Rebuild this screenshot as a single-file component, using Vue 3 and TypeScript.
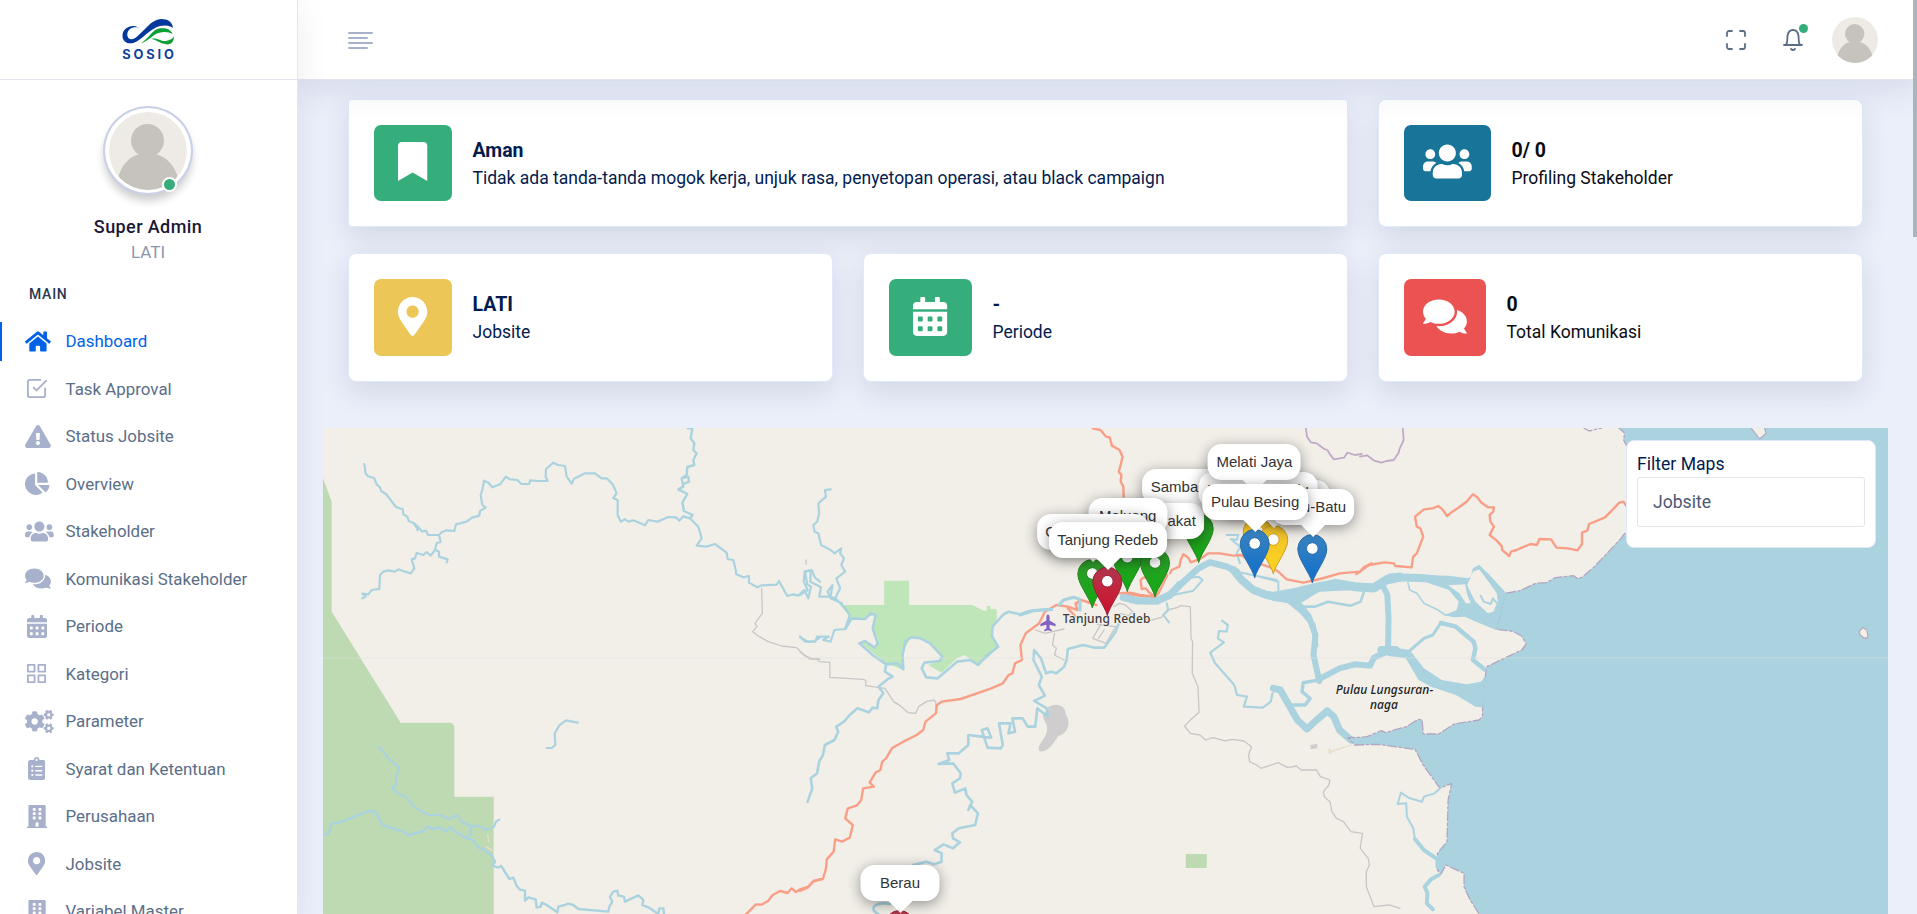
<script setup lang="ts">
interface Glyph { w: number; d: string; extra?: string; line?: boolean }

const sq = (x: number, y: number, s = 64): string =>
  `M${x + 12} ${y}h${s - 24}q12 0 12 12v${s - 24}q0 12-12 12h-${s - 24}q-12 0-12-12v-${s - 24}q0-12 12-12z`

const smallGear =
  'M512.1 191l-8.2 14.3c-3 5.3-9.4 7.5-15.1 5.4-11.8-4.4-22.6-10.7-32.1-18.6-4.6-3.8-5.8-10.5-2.8-15.7l8.2-14.3c-6.9-8-12.3-17.3-15.9-27.4h-16.5c-6 0-11.2-4.3-12.2-10.3-2-12-2.1-24.6 0-37.1 1-6 6.2-10.4 12.2-10.4h16.5c3.6-10.1 9-19.4 15.9-27.4l-8.2-14.3c-3-5.2-1.9-11.9 2.8-15.7 9.5-7.9 20.4-14.2 32.1-18.6 5.7-2.1 12.1.1 15.1 5.4l8.2 14.3c10.5-1.9 21.2-1.9 31.7 0L552 6.3c3-5.3 9.4-7.5 15.1-5.4 11.8 4.4 22.6 10.7 32.1 18.6 4.6 3.8 5.8 10.5 2.8 15.7l-8.2 14.3c6.9 8 12.3 17.3 15.9 27.4h16.5c6 0 11.2 4.3 12.2 10.3 2 12 2.1 24.6 0 37.1-1 6-6.2 10.4-12.2 10.4h-16.5c-3.6 10.1-9 19.4-15.9 27.4l8.2 14.3c3 5.2 1.9 11.9-2.8 15.7-9.5 7.9-20.4 14.2-32.1 18.6-5.7 2.1-12.1-.1-15.1-5.4l-8.2-14.3c-10.4 1.9-21.2 1.9-31.7 0zm-10.5-58.8c38.5 29.6 82.4-14.3 52.8-52.8-38.5-29.7-82.4 14.3-52.8 52.8z'
const bigGear =
  'M386.3 286.1l33.7 16.8c10.1 5.8 14.5 18.1 10.5 29.1-8.9 24.2-26.4 46.4-42.6 65.8-7.4 8.9-20.2 11.1-30.3 5.3l-29.1-16.8c-16 13.7-34.6 24.6-54.9 31.7v33.6c0 11.6-8.3 21.6-19.7 23.6-24.6 4.2-50.4 4.4-75.9 0-11.5-2-20-11.9-20-23.6V418c-20.3-7.2-38.9-18-54.9-31.7L74 403c-10 5.8-22.9 3.6-30.3-5.3-16.2-19.4-33.3-41.6-42.2-65.7-4-10.9.4-23.2 10.5-29.1l33.3-16.8c-3.9-20.9-3.9-42.4 0-63.4L12 205.8c-10.1-5.8-14.6-18.1-10.5-29 8.9-24.2 26-46.4 42.2-65.8 7.4-8.9 20.2-11.1 30.3-5.3l29.1 16.8c16-13.7 34.6-24.6 54.9-31.7V57.1c0-11.5 8.2-21.5 19.6-23.5 24.6-4.2 50.5-4.4 76-.1 11.5 2 20 11.9 20 23.6v33.6c20.3 7.2 38.9 18 54.9 31.7l29.1-16.8c10-5.8 22.9-3.6 30.3 5.3 16.2 19.4 33.2 41.6 42.1 65.8 4 10.9.1 23.2-10 29.1l-33.7 16.8c3.9 21 3.9 42.5 0 63.5zm-117.6 21.1c59.2-77-28.7-164.9-105.7-105.7-59.2 77 28.7 164.9 105.7 105.7z'

const glyphs: Record<string, Glyph> = {
  home: { w: 576, d: 'M280.37 148.26L96 300.11V464a16 16 0 0 0 16 16l112.06-.29a16 16 0 0 0 15.92-16V368a16 16 0 0 1 16-16h64a16 16 0 0 1 16 16v95.64a16 16 0 0 0 16 16.05L464 480a16 16 0 0 0 16-16V300L295.67 148.26a12.19 12.19 0 0 0-15.3 0zM571.6 251.47L488 182.56V44.05a12 12 0 0 0-12-12h-56a12 12 0 0 0-12 12v72.61L318.47 43a48 48 0 0 0-61 0L4.34 251.47a12 12 0 0 0-1.6 16.9l25.5 31A12 12 0 0 0 45.15 301l235.22-193.74a12.19 12.19 0 0 1 15.3 0L530.9 301a12 12 0 0 0 16.9-1.6l25.5-31a12 12 0 0 0-1.7-16.93z' },
  check: { w: 24, line: true, d: 'M9 11l3 3L22 4M21 12v7a2 2 0 0 1-2 2H5a2 2 0 0 1-2-2V5a2 2 0 0 1 2-2h11' },
  grid: { w: 24, line: true, d: 'M3 3h7v7H3zM14 3h7v7h-7zM14 14h7v7h-7zM3 14h7v7H3z' },
  warning: { w: 576, d: 'M569.517 440.013C587.975 472.007 564.806 512 527.94 512H48.054c-36.937 0-59.999-40.055-41.577-71.987L246.423 23.985c18.467-32.009 64.72-31.951 83.154 0l239.94 416.028zM288 354c-25.405 0-46 20.595-46 46s20.595 46 46 46 46-20.595 46-46-20.595-46-46-46zm-43.673-165.346l7.418 136c.347 6.364 5.609 11.346 11.982 11.346h48.546c6.373 0 11.635-4.982 11.982-11.346l7.418-136c.375-6.874-5.098-12.654-11.982-12.654h-63.383c-6.884 0-12.356 5.78-11.981 12.654z' },
  pie: { w: 544, d: 'M527.79 288H290.5l158.03 158.03c6.04 6.04 15.98 6.53 22.19.68 38.7-36.46 65.32-85.61 73.13-140.86 1.34-9.46-6.51-17.85-16.06-17.85zm-15.83-64.8C503.72 103.74 408.26 8.28 288.8.04 279.68-.59 272 7.1 272 16.24V240h223.77c9.14 0 16.82-7.68 16.19-16.8zM224 288V50.71c0-9.55-8.39-17.4-17.84-16.06C86.99 51.49-4.1 155.6.14 280.37 4.5 408.51 114.83 513.59 243.03 511.98c50.4-.63 96.97-16.87 135.26-44.03 7.9-5.6 8.42-17.23 1.57-24.08L224 288z' },
  users: { w: 640, d: 'M96 224c35.3 0 64-28.7 64-64s-28.7-64-64-64-64 28.7-64 64 28.7 64 64 64zm448 0c35.3 0 64-28.7 64-64s-28.7-64-64-64-64 28.7-64 64 28.7 64 64 64zm32 32h-64c-17.6 0-33.5 7.1-45.1 18.6 40.3 22.1 68.9 62 75.1 109.4h66c17.7 0 32-14.3 32-32v-32c0-35.3-28.7-64-64-64zm-256 0c61.9 0 112-50.1 112-112S381.9 32 320 32 208 82.1 208 144s50.1 112 112 112zm76.8 32h-8.3c-20.8 10-43.9 16-68.5 16s-47.6-6-68.5-16h-8.3C179.6 288 128 339.6 128 403.2V432c0 26.5 21.5 48 48 48h288c26.5 0 48-21.5 48-48v-28.8c0-63.6-51.6-115.2-115.2-115.2zm-223.7-13.4C161.5 263.1 145.6 256 128 256H64c-35.3 0-64 28.7-64 64v32c0 17.7 14.3 32 32 32h65.9c6.3-47.4 34.9-87.3 75.2-109.4z' },
  comments: { w: 576, d: 'M416 192c0-88.4-93.1-160-208-160S0 103.6 0 192c0 34.3 14.1 65.9 38 92-13.4 30.2-35.5 54.2-35.8 54.5-2.2 2.3-2.8 5.7-1.5 8.7S4.8 352 8 352c36.6 0 66.9-12.3 88.7-25 32.2 15.7 70.3 25 111.3 25 114.9 0 208-71.6 208-160zm122 220c23.9-26 38-57.7 38-92 0-66.9-53.5-124.2-129.3-148.1.9 6.6 1.3 13.3 1.3 20.1 0 105.9-107.7 192-240 192-10.8 0-21.3-.8-31.7-1.9C207.8 439.6 281.8 480 368 480c41 0 79.1-9.2 111.3-25 21.8 12.7 52.1 25 88.7 25 3.2 0 6.1-1.9 7.3-4.8 1.3-2.9.7-6.3-1.5-8.7-.3-.3-22.4-24.2-35.8-54.5z' },
  calendar: { w: 448, d: 'M0 464c0 26.5 21.5 48 48 48h352c26.5 0 48-21.5 48-48V192H0v272zM400 64h-48V16c0-8.8-7.2-16-16-16h-32c-8.8 0-16 7.2-16 16v48H160V16c0-8.8-7.2-16-16-16h-32c-8.8 0-16 7.2-16 16v48H48C21.5 64 0 85.5 0 112v48h448v-48c0-26.5-21.5-48-48-48z' + [64, 192, 320].map((x) => sq(x, 256) + sq(x, 384)).join('') },
  cogs: { w: 640, d: bigGear + smallGear, extra: smallGear },
  clipboard: { w: 384, d: 'M336 64h-80c0-35.3-28.7-64-64-64s-64 28.7-64 64H48C21.5 64 0 85.5 0 112v352c0 26.5 21.5 48 48 48h288c26.5 0 48-21.5 48-48V112c0-26.5-21.5-48-48-48zM96 424c-13.3 0-24-10.7-24-24s10.7-24 24-24 24 10.7 24 24-10.7 24-24 24zm0-96c-13.3 0-24-10.7-24-24s10.7-24 24-24 24 10.7 24 24-10.7 24-24 24zm0-96c-13.3 0-24-10.7-24-24s10.7-24 24-24 24 10.7 24 24-10.7 24-24 24zm96-192c13.3 0 24 10.7 24 24s-10.7 24-24 24-24-10.7-24-24 10.7-24 24-24zM168 192h144q8 0 8 8v16q0 8-8 8H168q-8 0-8-8v-16q0-8 8-8zM168 288h144q8 0 8 8v16q0 8-8 8H168q-8 0-8-8v-16q0-8 8-8zM168 384h144q8 0 8 8v16q0 8-8 8H168q-8 0-8-8v-16q0-8 8-8z' },
  building: { w: 448, d: 'M436 480h-20V24c0-13.255-10.745-24-24-24H56C42.745 0 32 10.745 32 24v456H12c-6.627 0-12 5.373-12 12v20h448v-20c0-6.627-5.373-12-12-12zM192 480v-84q0-12 12-12h40q12 0 12 12v84z' + [64, 160, 256].map((y) => sq(128, y) + sq(256, y)).join('') },
  marker: { w: 384, d: 'M172.268 501.67C26.97 291.031 0 269.413 0 192 0 85.961 85.961 0 192 0s192 85.961 192 192c0 77.413-26.97 99.031-172.268 309.67-9.535 13.774-29.93 13.773-39.464 0zM192 272c44.183 0 80-35.817 80-80s-35.817-80-80-80-80 35.817-80 80 35.817 80 80 80z' },
  bookmark: { w: 384, d: 'M0 512V48C0 21.49 21.49 0 48 0h288c26.51 0 48 21.49 48 48v464L192 400 0 512z' },
}

const glyphWidth = (name: string, size: number): number => {
  const g = glyphs[name]
  return g.line ? size : (g.w / 512) * size
}

const menu = [
  { label: 'Dashboard', icon: 'home', active: true },
  { label: 'Task Approval', icon: 'check' },
  { label: 'Status Jobsite', icon: 'warning' },
  { label: 'Overview', icon: 'pie' },
  { label: 'Stakeholder', icon: 'users' },
  { label: 'Komunikasi Stakeholder', icon: 'comments' },
  { label: 'Periode', icon: 'calendar' },
  { label: 'Kategori', icon: 'grid' },
  { label: 'Parameter', icon: 'cogs' },
  { label: 'Syarat dan Ketentuan', icon: 'clipboard' },
  { label: 'Perusahaan', icon: 'building' },
  { label: 'Jobsite', icon: 'marker' },
  { label: 'Variabel Master', icon: 'building' },
]

const cards = [
  { title: 'Aman', text: 'Tidak ada tanda-tanda mogok kerja, unjuk rasa, penyetopan operasi, atau black campaign', icon: 'bookmark', tone: 'green', cls: 'wide navy' },
  { title: '0/ 0', text: 'Profiling Stakeholder', icon: 'users', tone: 'teal', cls: 'dark' },
  { title: 'LATI', text: 'Jobsite', icon: 'marker', tone: 'yellow', cls: 'navy' },
  { title: '-', text: 'Periode', icon: 'calendar', tone: 'green cal', cls: 'navy' },
  { title: '0', text: 'Total Komunikasi', icon: 'comments', tone: 'red', cls: 'dark' },
]

/* Map layers, grouped by survey sheet; each sheet has its own origin and scale. */
interface Shape { k: string; d: string; w?: number }
const sheets: { t: string; shapes: Shape[] }[] = [
  {
    t: 'translate(320 425) scale(.33333)',
    shapes: [
      { k: 'park', d: 'M0 135L9 160 35 230V560L242 893H395L403 903V1115H521V1470H0Z' },
      { k: 'river', d: 'M133 117L137 145 143 153 163 160 170 178 180 187 183 198 198 207 228 246 248 253 250 268 262 275 266 288 282 295 290 308 300 312 306 320 318 317 324 330 357 330 365 322 380 316 403 318 408 298 440 290 456 278 478 272 480 258 497 248 487 240 482 210 487 195 492 167 505 173 517 187 540 178 558 155 570 163 592 165 604 177 628 177 630 166 655 168 683 168 677 155 678 132 700 113 714 120 735 123 740 155 755 176 762 161 795 145 825 145 845 160 860 160 878 178 890 205 880 219 893 226 893 270 902 290 915 283 925 290 940 286 975 301 985 285 1012 290 1045 276 1068 277 1078 287 1090 274 1110 280 1135 305 1145 340 1130 362 1160 365 1185 357 1220 383 1223 402 1240 405 1248 438 1248 447 1270 457 1287 453 1287 473 1312 487 1325 481 1370 479 1377 468 1402 513 1420 508 1435 512 1453 495 1465 520 1473 485 1462 478 1455 440 1475 435 1485 458 1500 470' },
      { k: 'river', d: 'M285 298L296 308 292 316M357 330L362 350 350 355 345 375 332 392 320 381 310 390 290 384 285 400 275 403 283 430 272 445 255 440 235 433 225 440 205 436 190 440 180 450 178 492 155 495 145 508 127 506 137 514 127 520M347 375L357 380 357 395 383 403 380 412' },
      { k: 'river', w: 2.4, d: 'M1103 10H1117L1112 40 1123 55 1120 75 1130 85 1120 105 1123 120 1102 126 1100 150 1085 160 1090 185 1075 193 1102 207 1087 232 1092 258 1118 270 1110 280M1085 160L1105 155 1107 170 1088 178' },
      { k: 'river', d: 'M773 893L738 886 718 901 704 925 706 960 695 969H680' },
      { k: 'river', d: 'M177 966L207 1001 237 1028 229 1053 229 1077 217 1090 240 1108 260 1118 282 1146 325 1170 360 1170 385 1182 412 1170 425 1190 455 1205 475 1202 495 1215 522 1205 528 1190 538 1184M455 1205L452 1228 437 1240' },
      { k: 'river', w: 2.4, d: 'M9 1230L26 1226 34 1197 60 1192 110 1172 147 1158 167 1161 187 1200 225 1213 245 1218 265 1230 312 1218 322 1203 335 1212 358 1207 378 1220 393 1207 405 1220 440 1240 460 1245 473 1267 490 1273 515 1292 525 1310 517 1322 535 1328 543 1322 568 1362 580 1358 590 1383 600 1394 615 1397 615 1427 625 1417 647 1423 650 1448 662 1445 665 1433 680 1440 712 1462 715 1445 735 1440 745 1436 760 1440 775 1452 865 1460 868 1445 877 1430 870 1415 880 1400 892 1397 895 1412 912 1415 915 1430 955 1411 970 1425 967 1440 985 1447 1015 1467 1018 1450 1030 1450 1032 1465' },
      { k: 'river', d: 'M1440 634L1455 650 1480 650 1500 638' },
      { k: 'lane', d: 'M1325 490L1327 565 1305 595 1311 604 1298 620 1318 635 1345 650 1385 663 1430 668 1455 692 1480 703 1500 702M1458 405V418' },
      { k: 'road', d: 'M1500 1362L1480 1370 1465 1385 1440 1393 1428 1401 1415 1390 1403 1404 1380 1398 1358 1410 1345 1427 1325 1439 1308 1438 1277 1469' },
      { k: 'pale', d: 'M503 1230L506 1250M498 1265L520 1278' },
    ],
  },
  {
    t: 'translate(800 425) scale(.38265 .33333)',
    shapes: [
      { k: 'forest', d: 'M105 540H220V467H285V540H450L480 557H488V543H498V553H514V583L500 610 505 640 518 665 490 700 465 718 430 690 410 700 370 743 335 720 372 703 355 670 320 645 290 638 268 680 270 735 225 715 160 655 175 648 200 668 203 640 190 610 197 570 135 585 118 612 130 575Z' },
      { k: 'park', d: 'M1008 1287H1063V1329H1008Z' },
      { k: 'quarry', d: 'M650 845C670 832 695 840 695 870 707 885 705 925 675 933 660 960 645 985 625 978 618 960 640 945 645 920 650 895 635 890 635 870Z' },
      { k: 'quarry', d: 'M1333 960L1352 956V970L1335 973Z' },
      { k: 'sand', d: 'M1383 985V972L1388 980 1440 960M1383 985L1395 978' },
      { k: 'road', d: 'M765 10L785 15 800 35 810 38 815 62 835 75 843 95 838 120 833 140 840 150 838 170 845 185 846 215' },
      { k: 'lane', d: 'M0 680L25 702 45 700 50 710 78 712V757L165 763 172 766V782L222 790 245 830 265 845 283 863 302 865 310 845 330 830 350 825 355 832V850' },
      { k: 'lane', d: 'M885 580L920 585 945 577 960 555 985 548 995 542 1020 545 1022 640 1026 650 1025 745 1040 785 1043 862 1025 880 1005 903 1020 925 1045 930 1060 945 1080 938 1110 948 1130 943 1160 948 1180 965 1172 990 1175 1010 1190 1018 1205 1030 1250 1013 1275 1028 1297 1023 1310 1035 1350 1035 1360 1055 1385 1065 1382 1080 1368 1100 1370 1115 1385 1130 1390 1160 1402 1180 1420 1190 1440 1220 1470 1225 1464 1270 1485 1300 1488 1320 1480 1340V1385L1500 1445 1540 1440 1568 1450' },
      { k: 'lane', d: 'M615 615L640 625 690 612M665 625L660 660 670 670 665 690 690 705M765 640L785 600 825 605 800 655ZM780 640L795 615M820 545L835 535 850 540 870 560 858 572 835 565M750 590L790 600' },
      { k: 'river', d: 'M80 193L65 195 68 215 48 235 50 265 45 290 35 300 38 320 48 325 55 360 80 375 90 385 108 370 105 385 115 400 108 420 118 440 95 460 105 490 92 520 80 515 85 480 72 500 80 520 110 535M92 520L115 545 130 570 118 612 90 615 80 650 60 645 75 635 45 635 40 650 20 650 0 637' },
      { k: 'river', d: 'M0 510L20 495 10 470 12 440 28 436 27 470 55 487 50 515 78 515' },
      { k: 'river', w: 2.6, d: 'M645 553L600 558 575 568 545 560 530 570 503 605 502 635 518 665 490 690 465 720 445 705 410 710 360 760 330 757 318 730 325 713 365 708 372 695 340 655 315 640 290 637 275 650 268 690 270 733 255 715 225 718 190 690 155 655 170 648 195 668 203 655 190 610 198 570 185 565 170 582 135 580 118 612' },
      { k: 'river', w: 2.6, d: 'M225 718L222 740 242 755 230 762 205 785 218 805 205 825 202 850 190 848 180 862 150 850 130 870 115 890 95 905 100 920 90 945 65 960 60 990 50 1010 45 1045 28 1060 32 1090 20 1130' },
      { k: 'river', w: 2.6, d: 'M833 595L825 620 795 668 770 668 740 660 700 672 697 705 690 725 670 745 655 740 643 745 630 700 612 675 610 705 632 755 624 780 640 812 612 828 645 850 648 875 620 850 615 905 595 905 582 880 555 880 562 920 545 925 550 895 520 895 530 960 525 970 490 968 475 915 490 910 500 938 475 935 440 930 440 960 415 985 385 985 390 1005 362 1017 400 1015 420 1045 418 1060 398 1075 405 1103 432 1090 435 1110 450 1130 440 1155 445 1140 465 1165 458 1200 415 1210 398 1225 400 1240 418 1252 400 1270 375 1258 352 1275 370 1285 370 1310 350 1318 330 1310 295 1320M235 1437C200 1430 185 1445 195 1460L205 1467' },
      { k: 'road', d: 'M845 505L900 515 925 515 937 505 960 450M735 525L720 535 725 555 700 545 670 540 640 560 625 595 590 625 576 660 580 705 562 715 555 745 545 750 530 775 500 790 420 822 370 830 358 840 355 865 328 890 322 915 305 930 270 950 240 970 225 1000 215 1010 210 1035 198 1042 182 1072 193 1085 165 1090 160 1125 148 1142 125 1150 118 1180 138 1200 130 1238 110 1250 92 1243 88 1280 70 1303 68 1330 60 1362 35 1368 20 1388 0 1398M700 550L725 580M725 535L735 525 775 540' },
      { k: 'admin', w: 1.8, d: 'M1322 10L1325 35 1335 52 1350 55 1370 72 1378 75 1385 88 1395 103 1422 98 1430 83 1450 90 1468 87' },
      { k: 'river', d: 'M1103 587L1118 600 1115 620 1095 618 1092 640 1108 652 1072 683 1085 715 1135 780 1142 810 1168 815 1160 845 1210 848 1230 830 1235 805' },
      { k: 'river', w: 7, d: 'M1237 790L1255 795 1275 835 1300 885 1325 912 1350 885 1378 858 1395 875 1410 915 1440 945' },
      { k: 'river', w: 3.5, d: 'M1285 840H1320L1333 820 1312 800 1315 773 1355 765' },
      { k: 'river', w: 6, d: 'M1295 525L1330 575 1347 630 1342 690 1357 768' },
      { k: 'river', w: 6, d: 'M1355 763L1410 730 1450 718 1490 722 1500 698 1530 682 1568 684' },
      { k: 'river', w: 6, d: 'M1522 480L1535 510 1538 580 1537 670' },
      { k: 'river', w: 2.6, d: 'M1310 545L1345 545 1380 530 1440 542 1465 530 1475 497' },
      { k: 'river', w: 9, d: 'M1240 515L1310 518 1350 488 1400 475 1450 485 1500 489 1532 465 1568 456' },
    ],
  },
  {
    t: 'translate(1360 420) scale(.35523 .33333)',
    shapes: [
      { k: 'sea', d: 'M725 20L745 40 742 60 755 85V330L735 355 700 395 660 440 625 472 612 475 600 467 550 473 525 488 495 490 450 512 410 520 383 628 430 634 455 648 468 672 455 690 400 718 357 740 352 775 345 830V890L335 900 265 912 222 942H178L175 900 165 898 130 920 72 938 60 932 20 950 0 952 -34 953 -15 975 50 973 155 988 178 1035 225 1105 258 1090 248 1140 245 1265 218 1300V1350L228 1362 242 1335 293 1360V1400L310 1440 338 1486H1490V20Z' },
      { k: 'coast', d: 'M725 20L745 40 742 60 755 85M745 340L735 355 700 395 660 440 625 472 612 475 600 467 550 473 525 488 495 490 450 512 410 520 383 628 430 634 455 648 468 672 455 690 400 718 357 740 352 775 345 830V890L335 900 265 912 222 942H178L175 900 165 898 130 920 72 938 60 932 20 950 0 952 -34 953 -15 975 50 973 155 988 178 1035 225 1105 258 1090 248 1140 245 1265 218 1300V1350L228 1362 242 1335 293 1360V1400L310 1440 338 1486M630 24L645 33 680 24' },
      { k: 'isle', d: 'M1098 20L1125 57 1143 40 1138 20ZM1405 635L1415 623 1427 630 1430 652 1420 655 1408 645Z' },
      { k: 'water', d: 'M190 466L250 467 305 475 312 470 318 445 335 434 365 465 412 520 383 630 320 602 295 590 262 592 240 586 272 570 278 545 250 510 190 488Z' },
      { k: 'land', d: 'M302 495L318 455 335 448 360 482 385 520 388 545 375 575 360 580 325 545 308 510Z' },
      { k: 'land', d: 'M248 496L296 493 302 525 312 550 298 550 280 520Z' },
      { k: 'river', w: 2, d: 'M340 528L348 545 368 552 374 535 386 550' },
      { k: 'water', d: 'M80 680L140 690 180 745 230 780 300 793 340 785 354 768 345 862 325 860 270 825 200 800 165 780 140 735 128 714 80 708Z' },
      { k: 'river', w: 8, d: 'M0 502H40L85 472 170 474 210 478M60 690H100' },
      { k: 'river', w: 3, d: 'M140 692L180 655 205 645 228 608' },
      { k: 'river', w: 4.5, d: 'M228 609L270 620 320 665 325 685 318 720 350 748' },
      { k: 'river', w: 1.6, d: 'M135 488L140 510 160 520 180 550 220 570 240 585 275 577M240 585H290' },
      { k: 'river', w: 2, d: 'M226 1105L210 1120 180 1130 175 1145 140 1135 115 1118 106 1152 130 1150 132 1190 150 1225 155 1260' },
      { k: 'river', w: 4, d: 'M155 1258L180 1290 218 1318V1340M205 1468L188 1450 190 1420 182 1400 200 1378 222 1365' },
      { k: 'road', d: 'M-10 462L0 455 25 435 70 427 95 430 100 438 145 442 150 410 160 400 178 350 170 325 160 320 155 290 180 268 205 265 220 258 232 268 245 288 260 275 275 265 300 245 318 223 330 232 342 248 360 262 377 262 375 275 365 285 367 305 377 320 365 345 385 362 400 380 400 390 420 408 425 395 440 390 480 372 498 375 505 357 538 358 553 383 585 385 612 391 625 372 625 338 640 332 645 312 690 292 730 248 742 245 750 258' },
      { k: 'admin', w: 1.8, d: 'M120 20L123 60 112 85 108 100 95 120 75 123 60 128 40 122 20 106 0 110' },
    ],
  },
  {
    t: 'translate(1020 425) scale(.33333)',
    shapes: [
      { k: 'river', w: 3.2, d: 'M0 570L40 557 95 553M118 540L130 525 160 517 178 522M180 530V555' },
      { k: 'river', w: 7.5, d: 'M310 517L350 527 410 528 450 510 478 480' },
      { k: 'river', w: 6.5, d: 'M470 490L500 462 535 430 570 412 620 425 650 440' },
      { k: 'river', w: 8, d: 'M640 435L665 465 700 495 740 510 800 522' },
      { k: 'water', d: 'M760 500L820 490 900 470 960 472 1053 478V494L960 497 900 500 830 530 780 530 740 515Z' },
      { k: 'river', w: 5, d: 'M800 522L845 560 880 600 888 660' },
      { k: 'river', w: 2, d: 'M460 510L520 497 548 465 535 455 500 460M440 535L445 555 430 570 447 592M620 330L655 330 650 345 632 342 660 365 650 385 660 415M700 450L775 470V505L730 500M650 440L770 465' },
      { k: 'road', d: 'M290 505L330 503 360 510 405 515 415 505M405 515L385 500 378 490 365 492 362 465 370 458 385 458M450 445L455 435 478 425 482 405 490 388 505 398 512 412 540 402 565 385 600 385 640 392 665 390 690 410 715 415 760 430 775 440 800 463 850 473 900 462 960 445 1020 440 1030 428 1055 415' },
    ],
  },
]

interface Site { name: string; x: number; y: number; tone: string; w?: number }
const sites: Site[] = [
  { name: 'Sambakungan', x: 1198.7, y: 562.7, tone: 'green' },
  { name: 'Samburakat', x: 1155, y: 597, tone: 'green' },
  { name: 'Maluang', x: 1127.3, y: 591.7, tone: 'green', w: 79 },
  { name: 'Merancang Ilir', x: 1273.3, y: 574, tone: 'yellow' },
  { name: 'Merancang Ulu', x: 1257.7, y: 566, tone: 'yellow' },
  { name: 'Batu-Batu', x: 1312.3, y: 583, tone: 'blue' },
  { name: 'Melati Jaya', x: 1254, y: 537.5, tone: 'none' },
  { name: 'Pulau Besing', x: 1254.7, y: 578, tone: 'blue' },
  { name: 'Gunung Tabur', x: 1092.3, y: 608, tone: 'green' },
  { name: 'Tanjung Redeb', x: 1107.3, y: 615.7, tone: 'red' },
  { name: 'Berau', x: 899.6, y: 959, tone: 'red', w: 79 },
]
const pins = sites.filter((s) => s.tone !== 'none').sort((a, b) => a.y - b.y)
</script>

<template>
  <div class="page">
    <aside class="sidebar">
      <div class="brand">
        <svg class="brand-mark" viewBox="0 0 156 80" width="52" height="26.67">
          <path d="M50 26C34 14 6 24 2 44-2 64 14 77 34 72 62 62 84 28 114 21 132 17 146 20 153 27 152 10 138 0 118 0 84 2 66 40 38 58 24 66 14 56 16 44 18 30 32 22 50 26Z" fill="#05389c" />
          <path d="M58 72C80 66 92 46 112 41 130 37 142 40 152 45 146 30 132 26 114 28 90 32 84 56 58 72Z" fill="#0a9f36" />
          <path d="M88 59C108 56 116 68 132 66 144 64 152 60 156 52 156 70 146 78 132 76 112 72 108 64 88 59Z" fill="#0a9f36" />
        </svg>
        <span class="brand-name">SOSIO</span>
      </div>
      <div class="profile">
        <div class="portrait">
          <svg viewBox="0 0 78 78" width="78" height="78">
            <clipPath id="face"><circle cx="39" cy="39" r="39" /></clipPath>
            <g clip-path="url(#face)">
              <rect width="78" height="78" fill="#eeebe6" />
              <circle cx="38.500" cy="28.500" r="16.500" fill="#c6c2bd" />
              <path d="M8 70C12 50 24 41 38.500 41S66 50 70 70V80H8z" fill="#c6c2bd" />
            </g>
          </svg>
          <i class="online"></i>
        </div>
        <div class="user-name">Super Admin</div>
        <div class="user-site">LATI</div>
      </div>
      <div class="section">MAIN</div>
      <nav class="menu">
        <a v-for="item in menu" :key="item.label" class="menu-item" :class="{ active: item.active }">
          <span class="menu-icon">
            <span class="icon-box">
              <svg v-if="glyphs[item.icon].line" class="line-icon" viewBox="0 0 24 24" width="23" height="23"><path :d="glyphs[item.icon].d" /></svg>
              <svg v-else class="solid-icon" :viewBox="`0 0 ${glyphs[item.icon].w} 512`" :width="glyphWidth(item.icon, 23)" height="23">
                <path :d="glyphs[item.icon].d" fill-rule="evenodd" />
                <path v-if="glyphs[item.icon].extra" :d="glyphs[item.icon].extra" fill-rule="evenodd" transform="translate(0 301)" />
              </svg>
            </span>
          </span>
          <span class="menu-label">{{ item.label }}</span>
        </a>
      </nav>
    </aside>

    <div class="main">
      <header class="topbar">
        <div class="burger"><i></i><i class="short"></i><i></i><i class="short"></i></div>
        <div class="actions">
          <svg class="full" viewBox="0 0 20 20" width="20" height="20">
            <path d="M1 6V3a2 2 0 0 1 2-2h3M14 1h3a2 2 0 0 1 2 2v3M19 14v3a2 2 0 0 1-2 2h-3M6 19H3a2 2 0 0 1-2-2v-3" />
          </svg>
          <div class="bell">
            <svg viewBox="0 0 20 22" width="20" height="22">
              <path d="M1 16H19M3 16C5 13 4 10 4.500 7 5 3 7 1 10 1s5 2 5.500 6c.5 3-.5 6 1.500 9M8 20Q10 22 12 20" />
            </svg>
            <i></i>
          </div>
          <svg class="me" viewBox="0 0 78 78" width="46" height="46">
            <g clip-path="url(#face)">
              <rect width="78" height="78" fill="#eeebe6" />
              <circle cx="38.500" cy="28.500" r="16.500" fill="#c6c2bd" />
              <path d="M8 70C12 50 24 41 38.500 41S66 50 70 70V80H8z" fill="#c6c2bd" />
            </g>
          </svg>
        </div>
      </header>

      <section class="cards">
        <article v-for="card in cards" :key="card.text" class="card" :class="card.cls">
          <div class="tile" :class="card.tone">
            <svg :viewBox="`0 0 ${glyphs[card.icon].w} 512`" :width="glyphWidth(card.icon, 39)" height="39">
              <path :d="glyphs[card.icon].d" fill-rule="evenodd" />
            </svg>
          </div>
          <div class="card-body">
            <div class="card-title">{{ card.title }}</div>
            <div class="card-text">{{ card.text }}</div>
          </div>
        </article>
      </section>

      <section class="map">
        <svg class="canvas" viewBox="323 428 1565 486" width="1565" height="486">
          <defs>
            <linearGradient id="g-green" x1="0" y1="0" x2="0" y2="1"><stop offset="0" stop-color="#319a2e" /><stop offset="1" stop-color="#12ab12" /></linearGradient>
            <linearGradient id="g-red" x1="0" y1="0" x2="0" y2="1"><stop offset="0" stop-color="#b2384f" /><stop offset="1" stop-color="#d00f27" /></linearGradient>
            <linearGradient id="g-blue" x1="0" y1="0" x2="0" y2="1"><stop offset="0" stop-color="#3a83bf" /><stop offset="1" stop-color="#106fcb" /></linearGradient>
            <linearGradient id="g-yellow" x1="0" y1="0" x2="0" y2="1"><stop offset="0" stop-color="#eebf2c" /><stop offset="1" stop-color="#ffd51f" /></linearGradient>
          </defs>
          <g v-for="(sheet, i) in sheets" :key="i" :transform="sheet.t">
            <path v-for="(s, j) in sheet.shapes" :key="j" :class="s.k" :d="s.d" :stroke-width="s.w" vector-effect="non-scaling-stroke" />
          </g>
          <path class="seam" d="M323 658H1888" />
          <path class="plane" d="M1048 614.500c1.100 0 1.600 1.300 1.600 2.700v3.300l6 3.600v2.200l-6-1.500v3.400l2.200 1.700v1.300l-3.800-.9-3.800.9v-1.300l2.200-1.700v-3.400l-6 1.500v-2.200l6-3.600v-3.300c0-1.400.5-2.700 1.600-2.700z" />
          <g class="place">
            <text x="1106.800" y="623" text-anchor="middle">Tanjung Redeb</text>
            <g class="island">
              <text x="1384.500" y="693.500" text-anchor="middle">Pulau Lungsuran-</text>
              <text x="1384" y="708.500" text-anchor="middle">naga</text>
            </g>
          </g>
          <g v-for="p in pins" :key="p.name" :transform="`translate(${p.x} ${p.y})`">
            <path class="pin" :class="'edge-' + p.tone" :fill="`url(#g-${p.tone})`" d="M0-.5C-3-11-14.500-24-14.500-34A14.500 14.500 0 0 1 14.500-34C14.500-24 3-11 0-.5Z" />
            <circle class="eye" :class="'edge-' + p.tone" cx="0" cy="-34.500" r="5.800" />
          </g>
        </svg>
        <div
          v-for="s in sites"
          :key="s.name"
          class="popup"
          :style="{ left: `${s.x - 322.6}px`, top: `${s.y - 94 - 428}px`, minWidth: s.w ? `${s.w}px` : undefined }"
        >{{ s.name }}</div>
        <div class="filter">
          <div class="filter-label">Filter Maps</div>
          <div class="filter-input">Jobsite</div>
        </div>
      </section>
    </div>
    <i class="scroll-thumb"></i>
  </div>
</template>

<style>
html,
body {
  margin: 0;
  height: 100%;
  overflow: hidden;
}
</style>

<style scoped>
* {
  box-sizing: border-box;
}
.page {
  position: relative;
  display: flex;
  width: 1917px;
  height: 914px;
  overflow: hidden;
  background: #ebeffa;
  font-family: Roboto, 'Liberation Sans', sans-serif;
}
.sidebar {
  position: relative;
  z-index: 3;
  flex: 0 0 298px;
  height: 914px;
  background: #fff;
  border-right: 1px solid #e3e5f0;
  box-shadow: 0 8px 30px rgba(40, 55, 100, 0.09);
}
.brand {
  height: 80px;
  padding: 19px 1px 0 0;
  border-bottom: 1px solid #e4e6f0;
  display: flex;
  flex-direction: column;
  align-items: center;
}
.brand-mark {
  display: block;
}
.brand-name {
  margin: 1.500px -3px 0 0;
  font: 700 12.800px/15px Inter, sans-serif;
  letter-spacing: 2.900px;
  color: #103f9c;
}
.profile {
  height: 200px;
  padding: 26px 1px 0 0;
  display: flex;
  flex-direction: column;
  align-items: center;
}
.portrait {
  position: relative;
  width: 90px;
  height: 89px;
  border: 2px solid #c9d0e8;
  border-radius: 50%;
  padding: 4px;
  background: #fff;
  box-shadow: 0 7px 8px -1px rgba(0, 0, 0, 0.2);
}
.portrait svg {
  display: block;
}
.online {
  position: absolute;
  right: 14px;
  bottom: 1.500px;
  width: 15px;
  height: 15px;
  border-radius: 50%;
  border: 2.500px solid #fff;
  background: #35ad7b;
}
.user-name {
  margin-top: 20px;
  font-size: 18px;
  line-height: 24px;
  font-weight: 500;
  letter-spacing: 0.4px;
  color: #1c1735;
}
.user-site {
  margin-top: 2px;
  font-size: 17px;
  line-height: 22px;
  color: #8b97ad;
}
.section {
  height: 37px;
  padding: 4px 0 0 29px;
  font-size: 14px;
  line-height: 20px;
  font-weight: 500;
  letter-spacing: 0.75px;
  color: #2b384e;
}
.menu {
  display: flex;
  flex-direction: column;
  height: 597px;
  overflow: hidden;
}
.menu-item {
  flex: none;
  display: flex;
  align-items: center;
  height: 39px;
  margin: 4.500px 0 4px;
  padding-left: 25.200px;
  color: #5b6e88;
}
.menu-item.active {
  box-shadow: inset 2px 0 #0162e8;
  color: #0162e8;
}
.menu-icon {
  width: 40.300px;
  display: flex;
}
.icon-box {
  flex: none;
  min-width: 23px;
  display: flex;
  justify-content: center;
}
.menu-icon svg {
  display: block;
  flex: none;
}
.solid-icon {
  fill: #a8b1cb;
}
.active .solid-icon {
  fill: #0162e8;
}
.line-icon {
  fill: none;
  stroke: #a8b1cb;
  stroke-width: 1.900;
  stroke-linecap: round;
  stroke-linejoin: round;
}
.menu-label {
  font-size: 16.900px;
  line-height: 22px;
}
.main {
  flex: 1;
  min-width: 0;
}
.topbar {
  position: relative;
  z-index: 2;
  height: 80px;
  display: flex;
  align-items: center;
  justify-content: space-between;
  padding: 0 39px 0 50px;
  background: #fff;
  border-bottom: 1px solid #e2e5f0;
  box-shadow: 0 8px 34px rgba(40, 55, 110, 0.12);
}
.burger {
  display: flex;
  flex-direction: column;
  gap: 3px;
  margin-top: 2px;
}
.burger i {
  width: 25px;
  height: 2px;
  border-radius: 1px;
  background: #a8b1cb;
}
.burger .short {
  width: 20px;
}
.actions {
  display: flex;
  align-items: center;
}
.full,
.bell svg {
  fill: none;
  stroke: #5b6e88;
  stroke-width: 1.800;
  stroke-linecap: round;
  stroke-linejoin: round;
}
.full {
  margin: 1px 37px 0 0;
}
.bell {
  position: relative;
  height: 22px;
  margin-right: 29px;
}
.bell i {
  position: absolute;
  right: -5px;
  top: -5px;
  width: 9px;
  height: 9px;
  border-radius: 50%;
  background: #35ad7b;
}
.cards {
  display: grid;
  grid-template-columns: repeat(3, 485px);
  grid-template-rows: 128px 129px;
  gap: 26px 30px;
  margin: 19px 0 46px 50px;
}
.card {
  display: flex;
  align-items: flex-start;
  padding: 25px;
  background: #fff;
  border: 1px solid #dfe9fb;
  border-radius: 8px;
  box-shadow: 0 10px 28px rgba(30, 45, 75, 0.12);
}
.wide {
  grid-column: span 2;
  border-radius: 4px;
}
.navy {
  color: #031b4e;
}
.dark {
  color: #0b0b12;
}
.tile {
  flex: none;
  width: 78px;
  height: 76px;
  border-radius: 7px;
  display: flex;
  align-items: center;
  justify-content: center;
  padding-bottom: 3px;
  fill: #fff;
}
.green {
  background: #36ae7c;
}
.cal {
  width: 83px;
}
.teal {
  width: 87px;
  background: #187498;
}
.yellow {
  background: #ecc758;
}
.cal,
.yellow,
.red {
  height: 77px;
}
.red {
  width: 82px;
  background: #eb5353;
}
.card-body {
  margin: 13px 0 0 20.500px;
}
.card-title {
  font-size: 19.500px;
  line-height: 25px;
  font-weight: 700;
}
.card-text {
  margin-top: 2px;
  font-size: 17.500px;
  line-height: 26px;
  white-space: nowrap;
}
.map {
  position: relative;
  width: 1565px;
  height: 486px;
  margin-left: 25px;
  overflow: hidden;
  background: #f2efe9;
}
.canvas {
  display: block;
}
.canvas path {
  stroke-linejoin: round;
  stroke-linecap: round;
}
.park {
  fill: #bedab2;
}
.forest {
  fill: #bfe6b8;
}
.quarry {
  fill: #d0cdce;
}
.sea,
.water {
  fill: #aad3df;
}
.land {
  fill: #f2efe9;
}
.isle {
  fill: #f2efe9;
  stroke: #b5a7bf;
  stroke-width: 1.200px;
}
.river {
  fill: none;
  stroke: #aad3df;
}
.river:not([stroke-width]) {
  stroke-width: 2.200px;
}
.road {
  fill: none;
  stroke: #f99f87;
  stroke-width: 2.400px;
}
.lane {
  fill: none;
  stroke: #c8c6c5;
  stroke-width: 1.300px;
}
.sand,
.pale {
  fill: none;
  stroke: #e6ddc8;
  stroke-width: 1.300px;
}
.coast {
  fill: none;
  stroke: #b3a5bf;
  stroke-width: 1.300px;
  stroke-dasharray: 9 2.500 2.500 2.500;
}
.admin {
  fill: none;
  stroke: #c0aac6;
}
.seam {
  stroke: #e3e2df;
  stroke-width: 1;
  opacity: 0.55;
}
.plane {
  fill: #8461c4;
}
.place {
  font: 500 12px 'Noto Sans', sans-serif;
  letter-spacing: 0.2px;
  fill: #3c3c3c;
  stroke: #f2efe9;
  stroke-width: 2px;
  paint-order: stroke;
}
.island {
  font-style: italic;
  letter-spacing: 0.1px;
  fill: #222;
}
.pin,
.eye {
  stroke-width: 1;
}
.eye {
  fill: #fff;
}
.edge-green {
  stroke: #23861f;
}
.edge-red {
  stroke: #97223a;
}
.edge-blue {
  stroke: #2a6da8;
}
.edge-yellow {
  stroke: #c9a227;
}
.popup {
  position: absolute;
  transform: translateX(-50%);
  height: 36px;
  padding: 0 8.500px;
  border-radius: 14px;
  background: #fff;
  box-shadow: 0 3px 14px rgba(0, 0, 0, 0.4);
  font: 15px/36px 'Liberation Sans', Arial, sans-serif;
  text-align: center;
  white-space: nowrap;
  color: #333;
}
.popup::after {
  content: '';
  position: absolute;
  left: 50%;
  top: 35px;
  margin-left: -13px;
  border: 13px solid transparent;
  border-top-color: #fff;
  border-bottom: 0;
}
.filter {
  position: absolute;
  right: 12px;
  top: 12px;
  width: 250px;
  height: 108px;
  padding: 10px;
  border-radius: 8px;
  border: 1px solid #dfe9fb;
  background: #fff;
}
.filter-label {
  font-size: 17.600px;
  line-height: 26px;
  color: #031b4e;
}
.filter-input {
  height: 50px;
  padding: 0 15px;
  border: 1px solid #e1e5ef;
  border-radius: 3px;
  font-size: 17.600px;
  line-height: 48px;
  color: #4d5875;
}
.scroll-thumb {
  position: absolute;
  z-index: 5;
  right: 0;
  top: 0;
  width: 4px;
  height: 237px;
  background: #a9b4bd;
}
</style>
